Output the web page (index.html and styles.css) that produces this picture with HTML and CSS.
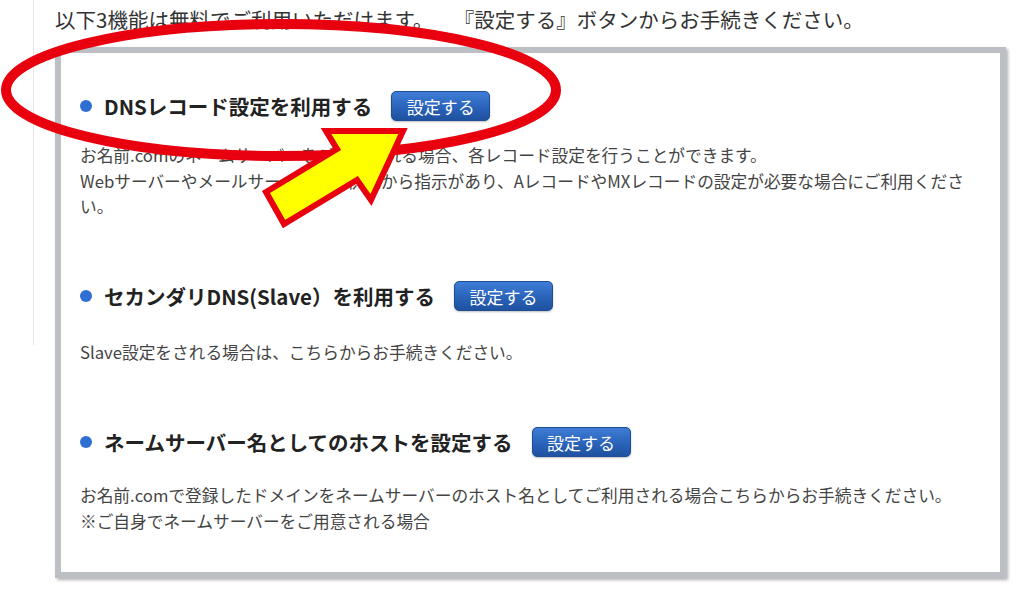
FILE: index.html
```html
<!DOCTYPE html>
<html lang="ja">
<head>
    <meta charset="UTF-8">
    <meta name="viewport" content="width=device-width, initial-scale=1.0">
    <title>DNS関連機能設定</title>
    <link rel="stylesheet" href="styles.css">
</head>
<body>
    <div class="page">
        <p class="intro">以下3機能は無料でご利用いただけます。　『設定する』ボタンからお手続きください。</p>

        <div class="panel">
            <div class="item">
                <div class="item-head">
                    <h3 class="item-title">DNSレコード設定を利用する</h3>
                    <button class="set-button">設定する</button>
                </div>
                <p class="item-desc desc-first">お名前.comのネームサーバーをご利用される場合、各レコード設定を行うことができます。<br>Webサーバーやメールサーバーの提供元から指示があり、AレコードやMXレコードの設定が必要な場合にご利用ください。</p>
            </div>

            <div class="item">
                <div class="item-head">
                    <h3 class="item-title">セカンダリDNS(Slave）を利用する</h3>
                    <button class="set-button">設定する</button>
                </div>
                <p class="item-desc desc-second">Slave設定をされる場合は、こちらからお手続きください。</p>
            </div>

            <div class="item">
                <div class="item-head">
                    <h3 class="item-title">ネームサーバー名としてのホストを設定する</h3>
                    <button class="set-button">設定する</button>
                </div>
                <p class="item-desc desc-third">お名前.comで登録したドメインをネームサーバーのホスト名としてご利用される場合こちらからお手続きください。<br>※ご自身でネームサーバーをご用意される場合</p>
            </div>
        </div>
    </div>

    <!-- annotation drawn over the screenshot -->
    <svg class="markup" width="1024" height="598" viewBox="0 0 1024 598">
        <ellipse cx="281" cy="90" rx="275" ry="66" fill="none" stroke="#e8000e" stroke-width="10"/>
        <polygon points="266,192 337,149 326,131 403,131 371,200 357,180 284,224" fill="#ffff00" stroke="#e8000e" stroke-width="6" stroke-linejoin="miter"/>
    </svg>
</body>
</html>
```

FILE: styles.css
```css
* {
    margin: 0;
    padding: 0;
    box-sizing: border-box;
}

body {
    font-family: "Noto Sans CJK JP", "Noto Sans", sans-serif;
    background: #ffffff linear-gradient(#e6e6e6, #e6e6e6) no-repeat 33px 0 / 1px 345px;
    color: #333;
    width: 1024px;
    height: 598px;
    overflow: hidden;
    position: relative;
    text-spacing-trim: space-all;
}

.page {
    padding-left: 55px;
}

.intro {
    font-size: 20.5px;
    line-height: 28px;
    padding-top: 5px;
    color: #333;
    margin-bottom: 14px;
}

.panel {
    width: 951px;
    background: #fff;
    border: 6px solid #bcbfc3;
    box-shadow: 2px 2px 3px rgba(0, 0, 0, 0.3);
    padding: 38px 20px 38px 19px;
}

.item + .item {
    margin-top: 61.5px;
}

.item-head {
    display: flex;
    align-items: center;
    gap: 19px;
    height: 30px;
}

.item-title {
    display: flex;
    align-items: center;
    font-size: 20.5px;
    font-weight: 700;
    color: #222;
}

.item-title::before {
    content: '';
    width: 12px;
    height: 12px;
    border-radius: 50%;
    background: #2f6fd4;
    margin-right: 12px;
}

.set-button {
    width: 99px;
    height: 30px;
    border: 1px solid #1d4d94;
    border-radius: 5px;
    background: linear-gradient(#3e7dd6 0%, #2a63ba 55%, #1f519f 100%);
    color: #fff;
    font-family: inherit;
    font-size: 17px;
    box-shadow: 0 1px 2px rgba(0, 0, 0, 0.25);
}

.item-desc {
    font-size: 16.7px;
    line-height: 25.5px;
    color: #444;
}

.desc-first {
    margin-top: 22px;
}

.desc-second {
    margin-top: 29px;
}

.desc-third {
    margin-top: 26px;
}

/* red / yellow annotation */
.markup {
    position: absolute;
    left: 0;
    top: 0;
    pointer-events: none;
}
```
